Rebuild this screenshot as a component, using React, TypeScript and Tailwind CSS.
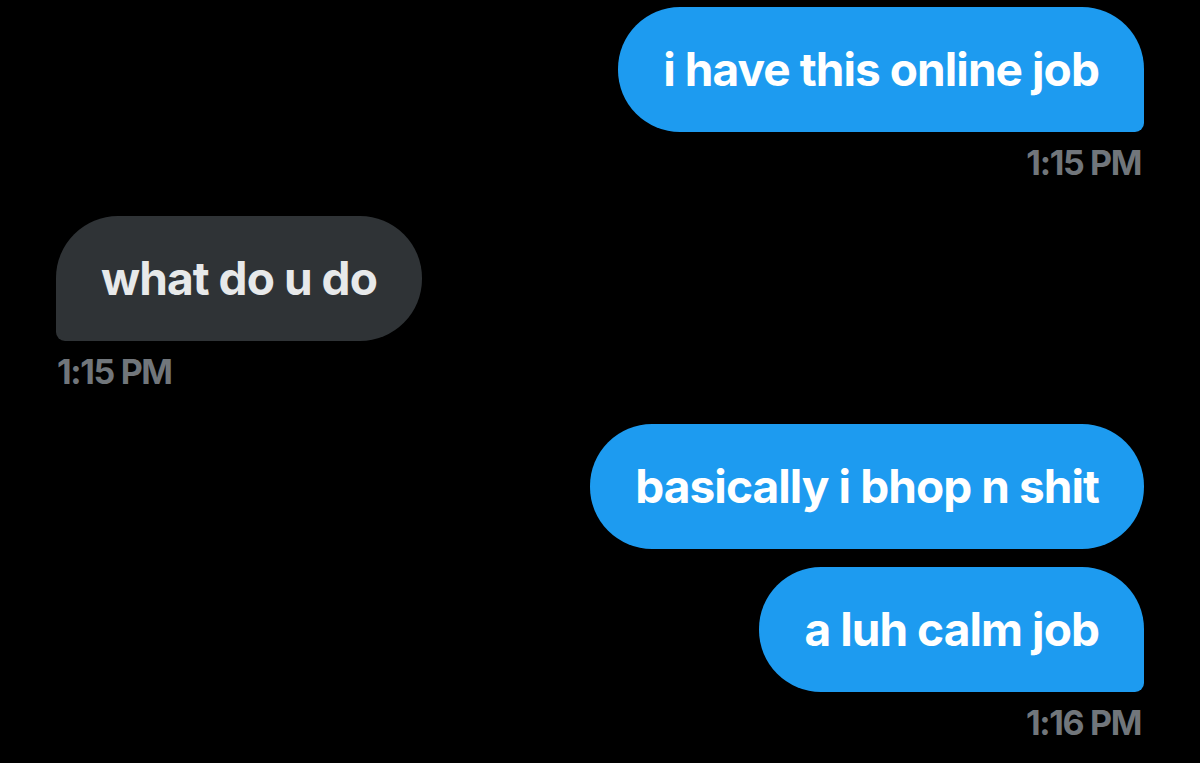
const Bubble = ({ text, me, tail }: { text: string; me: boolean; tail: boolean }) => {
    const corner = me
        ? tail
            ? "rounded-[62px] rounded-br-[9px]"
            : "rounded-[62px]"
        : tail
            ? "rounded-[62px] rounded-bl-[9px]"
            : "rounded-[62px]"
    return (
        <div
            className={`flex h-[125px] items-center px-[45px] text-[46px] font-bold tracking-[-0.02em] ${corner} ${me ? "bg-[#1d9bf0] text-white" : "bg-[#2f3336] text-[#e7e9ea]"}`}
        >
            {text}
        </div>
    )
}

const Time = ({ value, me }: { value: string; me: boolean }) => (
    <div className={`text-[34px] leading-[40px] font-bold tracking-[-0.04em] text-[#71767b] ${me ? "self-end pr-[3px]" : "self-start pl-[1px]"}`}>
        {value}
    </div>
)

const App = () => {
    return (
        <div className="h-[763px] w-[1200px] overflow-hidden bg-black px-[56px] pt-[7px] font-['Inter',sans-serif]">
            <div className="flex flex-col">
                <div className="flex flex-col items-end">
                    <Bubble text="i have this online job" me tail />
                    <div className="mt-[11px]" />
                    <Time value="1:15 PM" me />
                </div>

                <div className="mt-[33px] flex flex-col items-start">
                    <Bubble text="what do u do" me={false} tail />
                    <div className="mt-[11px]" />
                    <Time value="1:15 PM" me={false} />
                </div>

                <div className="mt-[32px] flex flex-col items-end gap-[18px]">
                    <Bubble text="basically i bhop n shit" me tail={false} />
                    <Bubble text="a luh calm job" me tail />
                </div>
                <div className="mt-[11px] flex flex-col items-end">
                    <Time value="1:16 PM" me />
                </div>
            </div>
        </div>
    )
}

export default App
